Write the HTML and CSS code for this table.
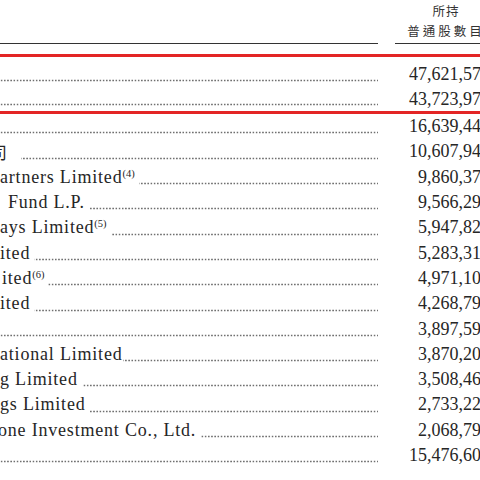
FILE: index.html
```html
<html>
<head>
    <title>主要股東</title>
    <link rel="stylesheet" href="styles.css">
</head>
<body>
<div class="sheet">
    <div class="head">
        <div class="head-label"></div>
        <div class="head-num">
            <span class="l1">所持</span>
            <span class="l2">普通股數目</span>
        </div>
    </div>

    <div class="mark">
        <div class="row"><div class="name"></div><div class="num">47,621,579</div></div>
        <div class="row"><div class="name"></div><div class="num">43,723,975</div></div>
    </div>

    <div class="row"><div class="name"></div><div class="num">16,639,449</div></div>
    <div class="row"><div class="name"><span class="lead cjk cut">司</span></div><div class="num">10,607,948</div></div>
    <div class="row"><div class="name"><span class="lead">artners Limited<sup>(4)</sup></span></div><div class="num">9,860,378</div></div>
    <div class="row"><div class="name"><span class="lead pad">Fund L.P.</span></div><div class="num">9,566,295</div></div>
    <div class="row"><div class="name"><span class="lead">ays Limited<sup>(5)</sup></span></div><div class="num">5,947,825</div></div>
    <div class="row"><div class="name"><span class="lead">ited</span></div><div class="num">5,283,318</div></div>
    <div class="row"><div class="name"><span class="lead nudge">ited<sup>(6)</sup></span></div><div class="num">4,971,100</div></div>
    <div class="row"><div class="name"><span class="lead">ited</span></div><div class="num">4,268,797</div></div>
    <div class="row"><div class="name"></div><div class="num">3,897,592</div></div>
    <div class="row"><div class="name"><span class="lead tight">ational Limited</span></div><div class="num">3,870,206</div></div>
    <div class="row"><div class="name"><span class="lead">g Limited</span></div><div class="num">3,508,460</div></div>
    <div class="row"><div class="name"><span class="lead">gs Limited</span></div><div class="num">2,733,223</div></div>
    <div class="row"><div class="name"><span class="lead clip">one Investment Co., Ltd.</span></div><div class="num">2,068,790</div></div>
    <div class="row"><div class="name"></div><div class="num">15,476,603</div></div>
</div>
</body>
</html>
```

FILE: styles.css
```css
html, body {
    margin: 0;
    padding: 0;
    background: #ffffff;
    overflow: hidden;
}

body {
    width: 480px;
    height: 480px;
    font-family: 'Liberation Serif', 'Noto Sans CJK TC', serif;
    color: #262626;
}

.sheet {
    width: 490px;
}

.head {
    display: grid;
    grid-template-columns: 378px 95px;
    column-gap: 17px;
    padding-top: 1px;
}

.head-label {
    border-bottom: 1px solid #333333;
}

.head-num {
    display: flex;
    flex-direction: column;
    align-items: center;
    padding-left: 7px;
    padding-bottom: 2px;
    border-bottom: 1px solid #333333;
    font-family: 'Noto Sans CJK TC', sans-serif;
    font-size: 12.5px;
    line-height: 20px;
    color: #333333;
}

.head-num .l1 {
    letter-spacing: 1px;
}

.head-num .l2 {
    letter-spacing: 3px;
}

.mark {
    margin-top: 10px;
    padding-top: 5px;
    border-top: 3px solid #e32525;
    border-bottom: 3px solid #e32525;
}

.mark .row {
    height: 24.6px;
    line-height: 24.6px;
}

.row {
    display: grid;
    grid-template-columns: 378px 95px;
    column-gap: 17px;
    height: 25.3px;
    line-height: 25.3px;
    font-size: 18px;
}

.name {
    white-space: nowrap;
    overflow: hidden;
    background-image: radial-gradient(circle, #707070 0.7px, transparent 1.2px);
    background-size: 3.2px 3px;
    background-repeat: repeat-x;
    background-position: 0 calc(100% - 5px);
}

.lead {
    display: inline-block;
    background: #ffffff;
    padding-right: 4px;
    letter-spacing: 0.8px;
}

.lead sup {
    font-size: 10.5px;
    letter-spacing: 0;
    vertical-align: 6px;
    line-height: 0;
}

.cjk {
    font-family: 'Noto Sans CJK TC', serif;
    font-size: 17px;
}

.cut {
    margin-left: -10px;
    padding-right: 13px;
}

.pad {
    padding-left: 8px;
}

.nudge {
    padding-left: 2px;
}

.tight {
    padding-right: 1px;
}

.clip {
    margin-left: -2px;
}

.num {
    text-align: right;
    white-space: nowrap;
}
```
